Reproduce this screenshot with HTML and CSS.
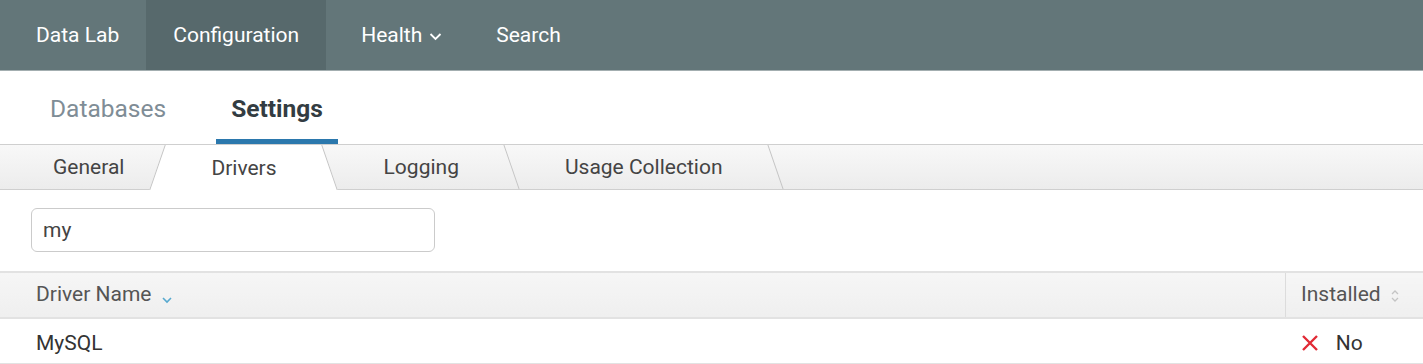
FILE: index.html
```html
<!DOCTYPE html>
<html>
<head>
    <link rel="stylesheet" href="styles.css">
    <title>Settings - Drivers</title>
</head>

<body>
    <div class="navbar">
        <a class="nav-item first">Data Lab</a>
        <a class="nav-item active">Configuration</a>
        <a class="nav-item dropdown">Health
            <svg class="caret" width="13" height="9" viewBox="0 0 13 9"><path d="M1.5 2 L6.5 7 L11.5 2" fill="none" stroke="#fff" stroke-width="1.8"/></svg>
        </a>
        <a class="nav-item">Search</a>
    </div>

    <div class="section-tabs">
        <a class="section-tab">Databases</a>
        <a class="section-tab selected">Settings</a>
    </div>

    <div class="sub-tabs">
        <div class="sub-tab first">General</div>
        <div class="sub-tab active">Drivers</div>
        <div class="sub-tab">Logging</div>
        <div class="sub-tab">Usage Collection</div>
    </div>

    <div class="filter">
        <input type="text" class="filter-input" value="my">
    </div>

    <table class="drivers">
        <thead>
            <tr>
                <th class="col-name">Driver Name
                    <svg class="sort" width="12" height="8" viewBox="0 0 12 8"><path d="M2 2 L6 6 L10 2" fill="none" stroke="#57a9cf" stroke-width="1.6"/></svg>
                </th>
                <th class="col-installed">Installed
                    <svg class="sort" width="10" height="16" viewBox="0 0 10 16"><path d="M2 6 L5 3 L8 6 M2 10 L5 13 L8 10" fill="none" stroke="#c4c4c4" stroke-width="1.3"/></svg>
                </th>
            </tr>
        </thead>
        <tbody>
            <tr>
                <td class="col-name">MySQL</td>
                <td class="col-installed">
                    <svg class="cross" width="18" height="18" viewBox="0 0 18 18"><path d="M2 2 L16 16 M16 2 L2 16" stroke="#e12a35" stroke-width="2.4"/></svg>
                    No
                </td>
            </tr>
        </tbody>
    </table>
</body>
</html>
```

FILE: styles.css
```css
body {
    margin: 0;
    font-family: Roboto, "Liberation Sans", sans-serif;
    background-color: #fff;
    color: #333;
}
.navbar {
    display: flex;
    height: 70px;
    padding-left: 9px;
    background-color: #637679;
    border-bottom: 1px solid #a3aeb0;
}
.nav-item {
    display: flex;
    align-items: center;
    padding: 0 27px;
    color: #fff;
    font-size: 21px;
}
.nav-item.active {
    background-color: #57696c;
}
.nav-item.dropdown {
    padding-left: 35px;
}
.caret {
    margin-left: 7px;
    margin-top: 2px;
}
.section-tabs {
    display: flex;
    gap: 35px;
    height: 73px;
    padding-left: 35px;
    border-bottom: 1px solid #cfcfcf;
}
.section-tab {
    display: flex;
    align-items: center;
    padding: 6px 15px 0;
    font-size: 24.5px;
    color: #7f8d96;
    border-bottom: 5px solid transparent;
}
.section-tab.selected {
    font-weight: bold;
    color: #333c42;
    border-bottom-color: #2b78ad;
}
.sub-tabs {
    display: flex;
    height: 44px;
    background: linear-gradient(#f8f8f8, #ececec);
    border-bottom: 1px solid #cfcfcf;
}
.sub-tab {
    position: relative;
    display: flex;
    align-items: center;
    padding: 0 53px;
    font-size: 21px;
    color: #444;
}
.sub-tab.first {
    padding-left: 53px;
    padding-right: 33px;
}
.sub-tab.active {
    z-index: 2;
    margin-bottom: -1px;
    padding: 0 54px;
}
.sub-tab.active::before,
.sub-tab.active::after {
    content: "";
    position: absolute;
    top: 0;
    bottom: 0;
    width: 55%;
    background-color: #fff;
    z-index: -1;
}
.sub-tab.active::before {
    left: 0;
    border-left: 1px solid #c4c4c4;
    transform: skewX(-19deg);
}
.sub-tab.active::after {
    right: 0;
    border-right: 1px solid #c4c4c4;
    transform: skewX(19deg);
}
.sub-tab.active ~ .sub-tab::after {
    content: "";
    position: absolute;
    top: 0;
    bottom: 0;
    right: 0;
    width: 1px;
    background-color: #c4c4c4;
    transform: skewX(19deg);
}
.filter {
    padding: 18px 31px 19px;
}
.filter-input {
    width: 404px;
    height: 44px;
    box-sizing: border-box;
    padding: 0 11px;
    border: 1.5px solid #cbcbcb;
    border-radius: 6px;
    font-family: Roboto, "Liberation Sans", sans-serif;
    font-size: 21px;
    color: #444;
    outline: none;
}
.drivers {
    width: 100%;
    border-collapse: collapse;
    font-size: 21px;
}
.drivers th {
    height: 41px;
    padding: 0 0 3px;
    font-weight: normal;
    text-align: left;
    color: #555;
    background: linear-gradient(#f6f6f6, #efefef);
    border-top: 2px solid #e2e2e2;
    border-bottom: 2px solid #e2e2e2;
}
.drivers td {
    height: 40px;
    padding: 4px 0 0;
    color: #333;
    border-bottom: 2px solid #e2e2e2;
}
.drivers .col-name {
    padding-left: 36px;
}
.drivers .col-installed {
    width: 122px;
    padding-left: 15px;
}
.drivers th.col-installed {
    border-left: 1px solid #dcdcdc;
}
.sort {
    margin-left: 4px;
    vertical-align: -3px;
}
.cross {
    margin-right: 12px;
    vertical-align: -2px;
}
```
